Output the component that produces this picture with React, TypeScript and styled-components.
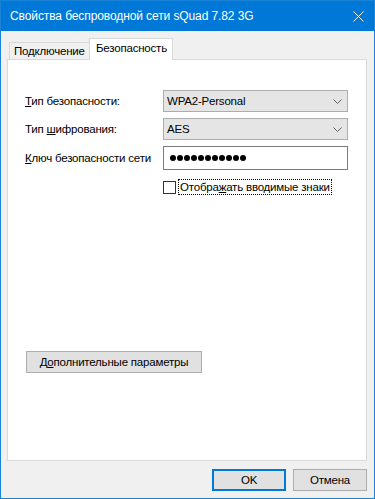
import styled, { createGlobalStyle } from 'styled-components';

const GlobalStyle = createGlobalStyle`
  html, body {
    margin: 0;
    padding: 0;
    background: #f0f0f0;
  }
  * {
    box-sizing: border-box;
  }
`;

const Window = styled.div`
  width: 375px;
  height: 499px;
  border: 1px solid #1883d7;
  background: #f0f0f0;
  display: flex;
  flex-direction: column;
  font-family: 'Segoe UI', 'Liberation Sans', Arial, sans-serif;
  font-size: 11.5px;
  letter-spacing: -0.2px;
  color: #000;
`;

const TitleBar = styled.div`
  height: 30px;
  background: #0078d7;
  display: flex;
  align-items: center;
  justify-content: space-between;
  padding: 0 10px 0 9px;
  color: #fff;
  font-size: 12px;
  letter-spacing: -0.1px;
`;

const CloseBtn = styled.div`
  width: 12px;
  height: 12px;
  display: flex;
  align-items: center;
  justify-content: center;
`;

const Body = styled.div`
  flex: 1;
  display: flex;
  flex-direction: column;
  padding: 7px 7px 0 6px;
`;

const TabRow = styled.div`
  height: 21px;
  display: flex;
  align-items: flex-end;
  padding-left: 2px;
`;

const Tab = styled.div<{ $active?: boolean }>`
  position: relative;
  z-index: ${(p) => (p.$active ? 1 : 0)};
  width: ${(p) => (p.$active ? '84px' : '81px')};
  height: ${(p) => (p.$active ? '22px' : '17px')};
  margin-bottom: ${(p) => (p.$active ? '-1px' : '0')};
  border: 1px solid #d9d9d9;
  border-bottom: none;
  background: ${(p) => (p.$active ? '#fff' : '#f0f0f0')};
  display: flex;
  align-items: center;
  padding-left: ${(p) => (p.$active ? '6px' : '4px')};
  padding-bottom: ${(p) => (p.$active ? '3px' : '0')};
  ${(p) => (p.$active ? 'margin-left: -1px;' : '')}
`;

const Panel = styled.div`
  height: 402px;
  border: 1px solid #d9d9d9;
  background: #fff;
  display: flex;
  flex-direction: column;
  padding: 30px 0 0 17px;
`;

const Form = styled.div`
  display: grid;
  grid-template-columns: 138px 185px;
  row-gap: 6px;
  align-items: center;
`;

const Label = styled.div`
  white-space: nowrap;
`;

const Select = styled.div`
  height: 22px;
  border: 1px solid #adadad;
  background: #e5e5e5;
  display: flex;
  align-items: center;
  justify-content: space-between;
  padding: 0 5px 0 3px;
`;

const TextBox = styled.div`
  height: 24px;
  border: 1px solid #7a7a7a;
  background: #fff;
  display: flex;
  align-items: center;
  padding-left: 6px;
`;

const Dot = styled.span`
  display: inline-block;
  width: 6px;
  height: 6px;
  border-radius: 50%;
  background: #000;
  margin-right: 1px;
`;

const CheckRow = styled.div`
  grid-column: 2;
  display: flex;
  align-items: center;
  margin-top: 3px;
`;

const Box = styled.div`
  width: 13px;
  height: 13px;
  border: 1px solid #333;
  background: #fff;
`;

const FocusText = styled.div`
  margin-left: 2px;
  border: 1px dotted #000;
  padding: 0 1px;
  line-height: 14px;
`;

const Button = styled.div<{ $default?: boolean }>`
  height: 22px;
  border: ${(p) => (p.$default ? '2px solid #0078d7' : '1px solid #adadad')};
  background: #e1e1e1;
  display: flex;
  align-items: center;
  justify-content: center;
`;

const AdvancedButton = styled(Button)`
  width: 176px;
  margin-top: 156px;
  margin-left: 1px;
`;

const Footer = styled.div`
  display: flex;
  justify-content: flex-end;
  gap: 7px;
  padding-top: 8px;
`;

const FooterButton = styled(Button)`
  width: 74px;
`;

const Chevron = () => (
  <svg width="9" height="5" viewBox="0 0 9 5">
    <polyline points="0.5,0.5 4.5,4.5 8.5,0.5" fill="none" stroke="#606060" strokeWidth="1" />
  </svg>
);

export default function App() {
  return (
    <>
      <GlobalStyle />
      <Window>
        <TitleBar>
          <span>Свойства беспроводной сети sQuad 7.82 3G</span>
          <CloseBtn>
            <svg width="11" height="11" viewBox="0 0 11 11">
              <path d="M0.5 0.5 L10.5 10.5 M10.5 0.5 L0.5 10.5" stroke="#fff" strokeWidth="1" />
            </svg>
          </CloseBtn>
        </TitleBar>
        <Body>
          <TabRow>
            <Tab>Подключение</Tab>
            <Tab $active>Безопасность</Tab>
          </TabRow>
          <Panel>
            <Form>
              <Label>
                <u>Т</u>ип безопасности:
              </Label>
              <Select>
                <span>WPA2-Personal</span>
                <Chevron />
              </Select>
              <Label>
                Тип <u>ш</u>ифрования:
              </Label>
              <Select>
                <span>AES</span>
                <Chevron />
              </Select>
              <Label>
                <u>К</u>люч безопасности сети
              </Label>
              <TextBox>
                {Array.from({ length: 11 }).map((_, i) => (
                  <Dot key={i} />
                ))}
              </TextBox>
              <CheckRow>
                <Box />
                <FocusText>
                  Отобра<u>ж</u>ать вводимые знаки
                </FocusText>
              </CheckRow>
            </Form>
            <AdvancedButton>
              Д<u>о</u>полнительные параметры
            </AdvancedButton>
          </Panel>
          <Footer>
            <FooterButton $default>OK</FooterButton>
            <FooterButton>Отмена</FooterButton>
          </Footer>
        </Body>
      </Window>
    </>
  );
}
